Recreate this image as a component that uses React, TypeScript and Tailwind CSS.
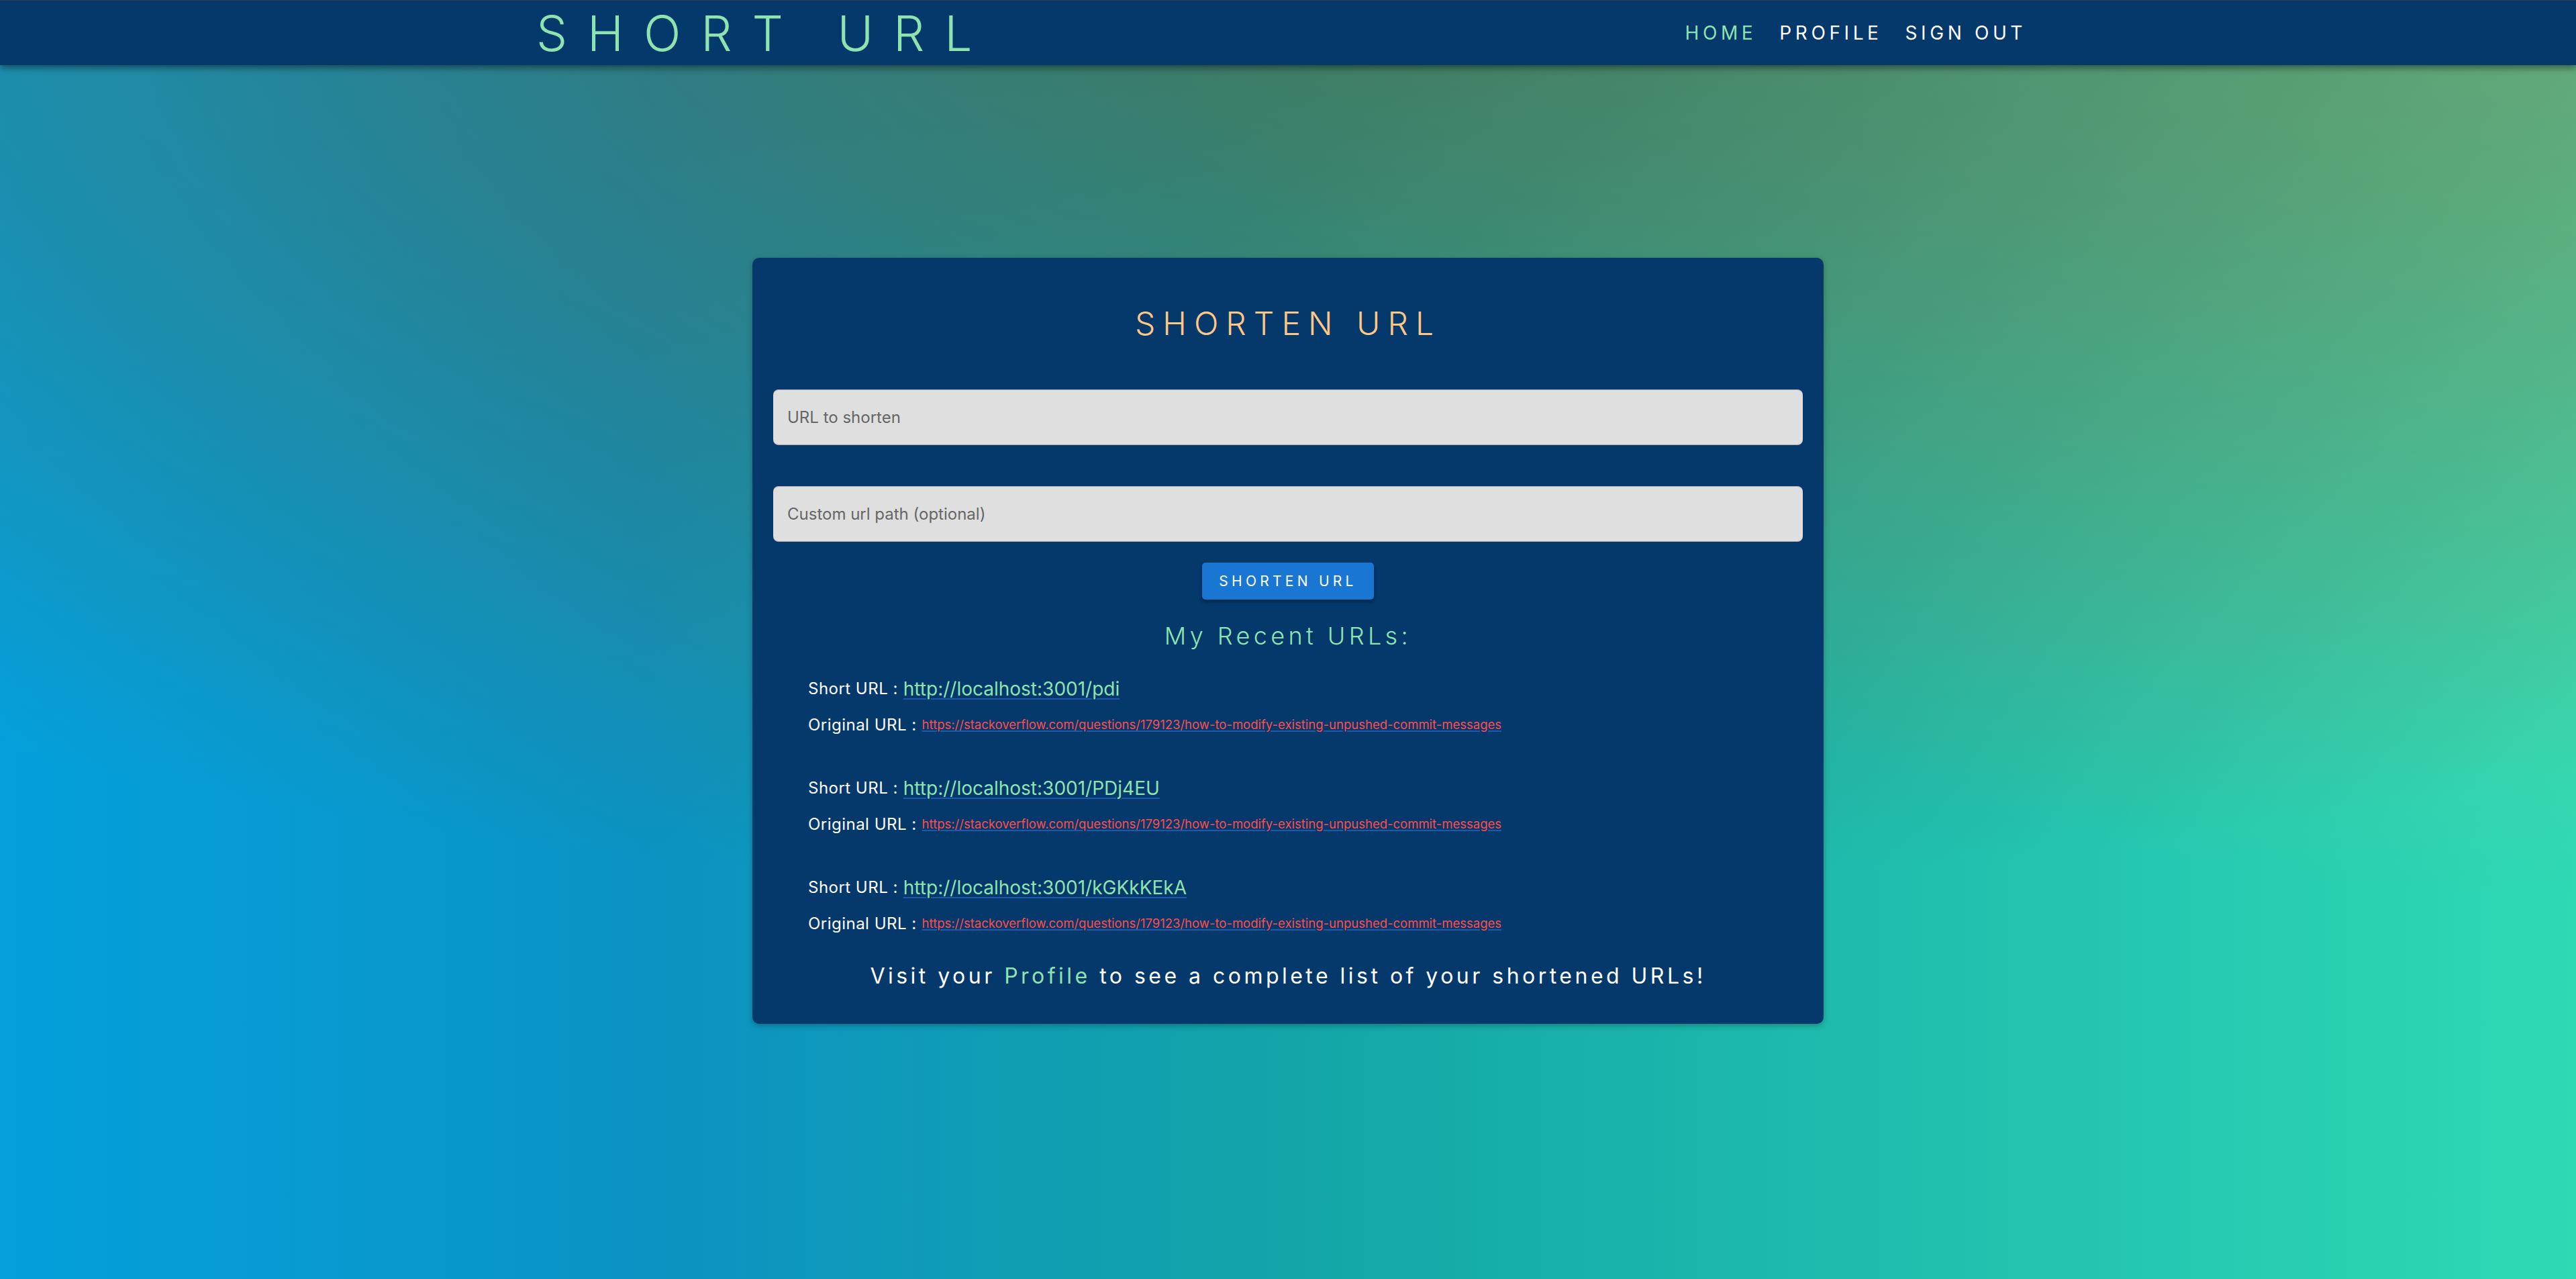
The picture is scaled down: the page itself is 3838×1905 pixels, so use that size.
/**
 * Short URL home page: nav bar, shorten form and recent URLs list.
 */

const recentUrls = [
  { short: 'http://localhost:3001/pdi' },
  { short: 'http://localhost:3001/PDj4EU' },
  { short: 'http://localhost:3001/kGKkKEkA' },
];

const ORIGINAL = 'https://stackoverflow.com/questions/179123/how-to-modify-existing-unpushed-commit-messages';

function NavBar() {
  return (
    <nav className="relative z-10 h-[97px] border-t border-[#2b3a4a] bg-[#05386b] shadow-[0_4px_10px_rgba(0,0,0,0.45)]">
      <div className="mx-auto flex h-full w-[2240px] items-center justify-between pr-[20px]">
        <a className="text-[73px] font-light leading-none tracking-[0.41em] text-[#8ee4af]">SHORT URL</a>
        <div className="flex items-center gap-[34px] text-[28px] leading-none tracking-[0.2em]">
          <a className="text-[#8ee4af]">HOME</a>
          <a className="text-white">PROFILE</a>
          <a className="text-white">SIGN OUT</a>
        </div>
      </div>
    </nav>
  );
}

function RecentItem({ short }: { short: string }) {
  return (
    <div className="flex flex-col">
      <div className="flex h-[54px] items-center gap-[8px]">
        <span className="text-[24px] tracking-[0.02em] text-white">Short URL :</span>
        <a className="text-[28px] text-[#8ee4af] underline decoration-[#1b5aa8] decoration-2 underline-offset-4">
          {short}
        </a>
      </div>
      <div className="flex h-[54px] items-center gap-[8px]">
        <span className="text-[24px] tracking-[0.02em] text-white">Original URL :</span>
        <a className="text-[18.5px] text-[#ff4d4d] underline decoration-[#1b5aa8] decoration-2 underline-offset-2">
          {ORIGINAL}
        </a>
      </div>
    </div>
  );
}

export default function App() {
  return (
    <div
      className="min-h-[1905px] bg-[radial-gradient(ellipse_95%_70%_at_52%_0%,rgba(85,100,65,0.68),rgba(85,100,65,0)_100%),radial-gradient(ellipse_55%_70%_at_100%_0%,rgba(160,190,120,0.55),rgba(160,190,120,0)_100%),linear-gradient(to_right,#04a0dc,#0b93c4_25%,#13a5a8_50%,#2ed9b4)]"
      style={{ fontFamily: 'Inter, "Open Sans", sans-serif' }}
    >
      <NavBar />

      <main className="mx-auto mt-[287px] flex w-[1596px] flex-col rounded-[10px] bg-[#05386b] px-[31px] pb-[51px] pt-[74px] shadow-[0_3px_8px_rgba(0,0,0,0.25)]">
        <h1 className="text-center text-[48px] font-light leading-none tracking-[0.23em] text-[#ffc784]">
          SHORTEN URL
        </h1>

        <input
          className="mt-[74px] h-[83px] w-full rounded-lg border-y border-[#a9a9a9] bg-[#dfdfdf] pl-[21px] text-[24px] text-[#333] outline-none placeholder:text-[#666]"
          placeholder="URL to shorten"
        />
        <input
          className="mt-[61px] h-[83px] w-full rounded-lg border-y border-[#a9a9a9] bg-[#dfdfdf] pl-[21px] text-[24px] text-[#333] outline-none placeholder:text-[#666]"
          placeholder="Custom url path (optional)"
        />

        <button className="mx-auto mt-[31px] h-[55px] w-[256px] rounded-[5px] bg-[#1976d2] text-[21px] tracking-[0.25em] text-white shadow-[0_3px_5px_rgba(0,0,0,0.35)]">
          SHORTEN URL
        </button>

        <h2 className="mt-[36px] text-center text-[36px] font-light leading-none tracking-[0.15em] text-[#8ee4af]">
          My Recent URLs:
        </h2>

        <div className="ml-[52px] mt-[34px] flex flex-col gap-[40px]">
          {recentUrls.map((u) => (
            <RecentItem key={u.short} short={u.short} />
          ))}
        </div>

        <p className="mt-[31px] text-center text-[32px] leading-[40px] tracking-[0.14em] text-white">
          Visit your <a className="text-[#8ee4af]">Profile</a> to see a complete list of your shortened URLs!
        </p>
      </main>
    </div>
  );
}
